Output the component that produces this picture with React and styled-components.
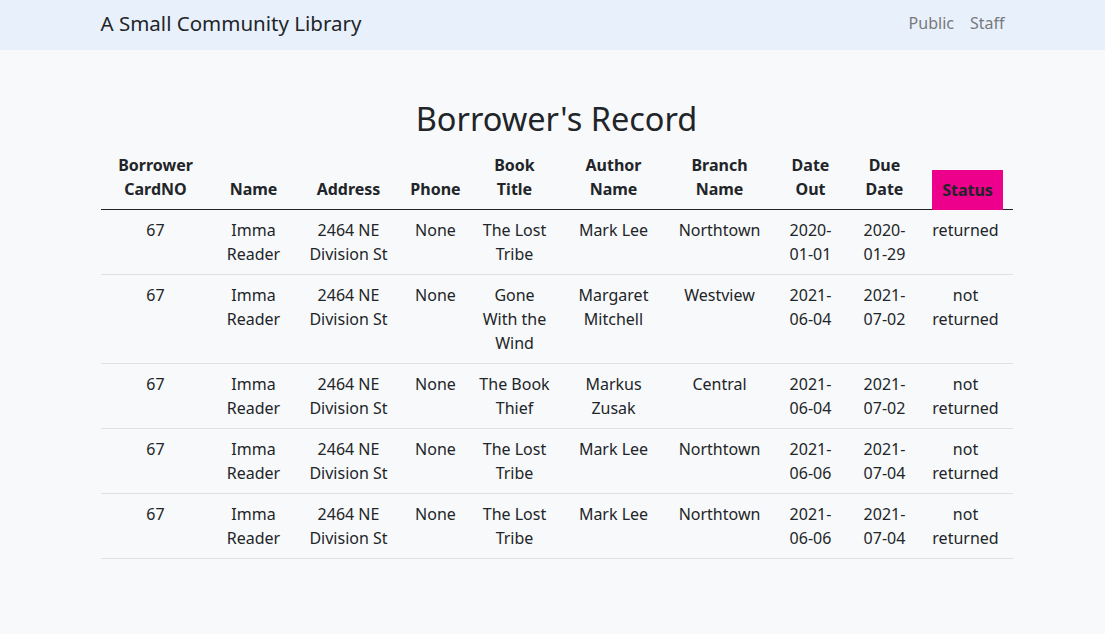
import React from "react";
import styled, { createGlobalStyle } from "styled-components";

const GlobalStyle = createGlobalStyle`
  html, body {
    margin: 0;
    padding: 0;
    background: #f8f9fa;
    font-family: "Noto Sans", "Open Sans", sans-serif;
    color: #212529;
  }
`;

const records = [
  { card: "67", name: "Imma Reader", address: "2464 NE Division St", phone: "None", title: "The Lost Tribe", author: "Mark Lee", branch: "Northtown", out: "2020-01-01", due: "2020-01-29", status: "returned" },
  { card: "67", name: "Imma Reader", address: "2464 NE Division St", phone: "None", title: "Gone With the Wind", author: "Margaret Mitchell", branch: "Westview", out: "2021-06-04", due: "2021-07-02", status: "not returned" },
  { card: "67", name: "Imma Reader", address: "2464 NE Division St", phone: "None", title: "The Book Thief", author: "Markus Zusak", branch: "Central", out: "2021-06-04", due: "2021-07-02", status: "not returned" },
  { card: "67", name: "Imma Reader", address: "2464 NE Division St", phone: "None", title: "The Lost Tribe", author: "Mark Lee", branch: "Northtown", out: "2021-06-06", due: "2021-07-04", status: "not returned" },
  { card: "67", name: "Imma Reader", address: "2464 NE Division St", phone: "None", title: "The Lost Tribe", author: "Mark Lee", branch: "Northtown", out: "2021-06-06", due: "2021-07-04", status: "not returned" },
];

const columns = [
  { label: "Borrower CardNO", key: "card", width: 110 },
  { label: "Name", key: "name", width: 86 },
  { label: "Address", key: "address", width: 104 },
  { label: "Phone", key: "phone", width: 70 },
  { label: "Book Title", key: "title", width: 88 },
  { label: "Author Name", key: "author", width: 110 },
  { label: "Branch Name", key: "branch", width: 102 },
  { label: "Date Out", key: "out", width: 80 },
  { label: "Due Date", key: "due", width: 68 },
  { label: "Status", key: "status", width: 94, highlight: true },
];

const App = () => {
  return (
    <>
      <GlobalStyle />
      <Navbar>
        <NavInner>
          <Brand>A Small Community Library</Brand>
          <NavLinks>
            <NavLink>Public</NavLink>
            <NavLink>Staff</NavLink>
          </NavLinks>
        </NavInner>
      </Navbar>

      <Container>
        <Title>Borrower's Record</Title>
        <Table>
          <colgroup>
            {columns.map((c) => (
              <col key={c.key} style={{ width: c.width }} />
            ))}
          </colgroup>
          <thead>
            <tr>
              {columns.map((c) => (
                <HeadCell key={c.key} $highlight={c.highlight}>
                  {c.highlight ? <Marker>{c.label}</Marker> : c.label}
                </HeadCell>
              ))}
            </tr>
          </thead>
          <tbody>
            {records.map((r, i) => (
              <tr key={i}>
                {columns.map((c) => (
                  <Cell key={c.key}>{r[c.key]}</Cell>
                ))}
              </tr>
            ))}
          </tbody>
        </Table>
      </Container>
    </>
  );
};

export default App;

const Navbar = styled.nav`
  background: #e8f0fb;
  height: 50px;
`;

const NavInner = styled.div`
  width: 912px;
  margin-left: calc(50% - 452px);
  height: 100%;
  display: flex;
  align-items: center;
  justify-content: space-between;
  padding-bottom: 5px;
  box-sizing: border-box;
`;

const Brand = styled.a`
  font-size: 20.5px;
  line-height: 30px;
  color: #212529;
`;

const NavLinks = styled.div`
  display: flex;
  gap: 16px;
  padding-right: 8px;
`;

const NavLink = styled.a`
  font-size: 16px;
  line-height: 24px;
  color: #77797c;
`;

const Container = styled.main`
  width: 912px;
  margin-left: calc(50% - 452px);
  padding-top: 46px;
`;

const Title = styled.h1`
  margin: 0 0 12px;
  text-align: center;
  font-size: 32.5px;
  font-weight: 400;
  line-height: 45px;
`;

const Table = styled.table`
  width: 912px;
  table-layout: fixed;
  border-collapse: collapse;
  font-size: 16px;
  line-height: 24px;
  text-align: center;
`;

const HeadCell = styled.th`
  vertical-align: bottom;
  font-weight: 700;
  padding: ${(p) => (p.$highlight ? "0 6px 0 10px" : "0 8px 8px")};
  border-bottom: 1px solid #212529;
`;

const Marker = styled.span`
  display: inline-block;
  position: relative;
  top: 1px;
  padding: 8px 10px;
  background: #ec008c;
`;

const Cell = styled.td`
  vertical-align: top;
  padding: 8px;
  border-bottom: 1px solid #dee2e6;
`;
